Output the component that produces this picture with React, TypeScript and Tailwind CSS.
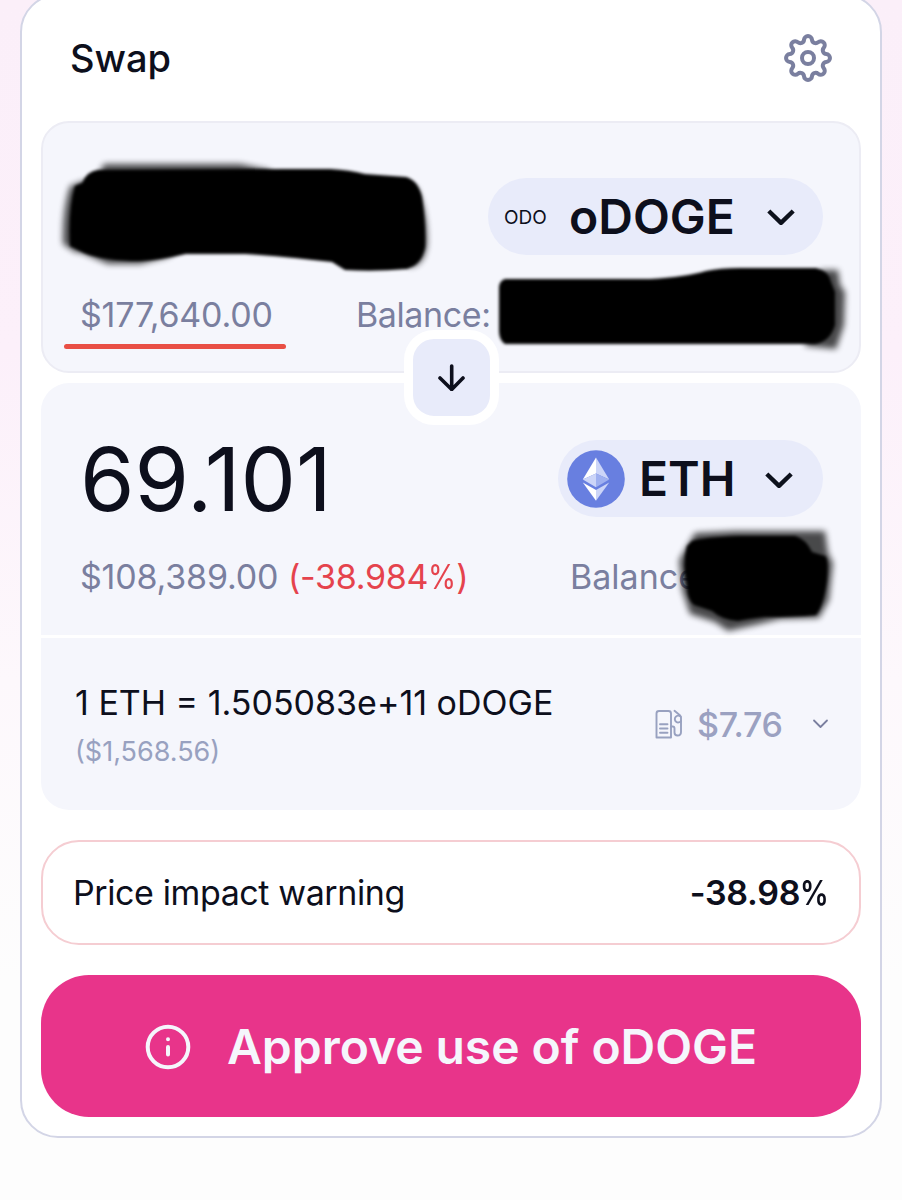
import React from "react";

const point = (r: number, deg: number) => {
  const a = (deg * Math.PI) / 180;
  return [25 + r * Math.cos(a), 25 + r * Math.sin(a)];
};

// Eight rounded teeth joined by rounded valleys.
function gearPath() {
  const tip = 4;
  const valley = 3.67;
  const t = tip / (tip + valley);
  const mix = (c: number[], v: number[]) =>
    `${(c[0] + (v[0] - c[0]) * t).toFixed(2)} ${(c[1] + (v[1] - c[1]) * t).toFixed(2)}`;
  let d = "";
  for (let k = 0; k < 8; k++) {
    const c = point(18, k * 45);
    const before = point(20, k * 45 - 22.5);
    const after = point(20, k * 45 + 22.5);
    d += k === 0 ? `M${mix(c, before)}` : `A${valley} ${valley} 0 0 0 ${mix(c, before)}`;
    d += `A${tip} ${tip} 0 0 1 ${mix(c, after)}`;
  }
  const first = mix(point(18, 0), point(20, -22.5));
  return `${d}A${valley} ${valley} 0 0 0 ${first}Z`;
}

const Gear = () => (
  <svg width="50" height="50" viewBox="0 0 50 50" fill="none" stroke="#7a7f9f" strokeWidth="4">
    <path d={gearPath()} />
    <circle cx="25" cy="25" r="6" />
  </svg>
);

const Chevron = () => (
  <svg width="28" height="18" viewBox="0 0 28 18" fill="none" stroke="#0d111c" strokeWidth="4.4" strokeLinejoin="round">
    <path d="M1.8 3 14 14.8 26.2 3" />
  </svg>
);

const EthLogo = () => (
  <svg width="58" height="58" viewBox="0 0 58 58">
    <circle cx="29" cy="29" r="28.8" fill="#687fe0" />
    <path d="M29 7.5 15.8 29.5 29 23.6Z" fill="#fff" />
    <path d="M29 7.5V23.6L42.2 29.5Z" fill="#ccd5f8" />
    <path d="M15.8 29.5 29 23.6V37.2Z" fill="#ccd5f8" />
    <path d="M42.2 29.5 29 23.6V37.2Z" fill="#9fb0f0" />
    <path d="M15.8 32.4 29 40.1V50.8Z" fill="#fff" />
    <path d="M42.2 32.4 29 40.1V50.8Z" fill="#ccd5f8" />
  </svg>
);

const GasPump = () => (
  <svg width="28" height="30" viewBox="0 0 28 30" fill="none" stroke="#98a1c0" strokeWidth="1.9" strokeLinecap="round" strokeLinejoin="round">
    <path d="M1.5 28.5V4.5Q1.5 2 4 2H13.5Q16 2 16 4.5V28.5Z" />
    <path d="M5 15.3H12.5M5 19.5H12.5M5 23.7H12.5" />
    <path d="M16 17.5H17.7Q19.5 17.5 19.5 19.5V23.5Q19.5 26.5 22.6 26.5Q26 26.5 26 23V8.5Q26 7.4 25.2 6.6L19.5 1.8" />
    <path d="M25.6 7.6A3.4 3.4 0 1 0 26 12" />
  </svg>
);

const Percent = () => <span className="-mr-[5px] inline-block origin-left scale-x-[.84]">%</span>;

export default function App() {
  return (
    <div className="h-[1200px] w-[902px] overflow-hidden bg-[linear-gradient(#fbeff9_0px,#fcf0fa_350px,#fdf8fc_680px,#fdfdfd_980px)] px-5 font-['Inter',sans-serif] text-[#0d0f1c]">
      <main className="-mt-[6px] h-[1144px] w-[862px] rounded-[38px] border-2 border-[#d3d5e6] bg-white px-[19px]">
        <header className="flex h-[125px] items-center justify-between pr-7 pb-0.5 pl-[29px]">
          <h1 className="text-[38px] leading-[50px] font-medium">Swap</h1>
          <button aria-label="Settings">
            <Gear />
          </button>
        </header>

        <section className="relative h-[252px] w-[820px] rounded-[28px] border-2 border-[#ececf4] bg-[#f5f6fc] pt-[55px]">
          <div className="flex h-[77px] justify-end pr-9">
            <button className="flex h-[77px] w-[335px] items-center rounded-full bg-[#e8ebfa] pl-4">
              <span className="w-[65px] pt-[3px] text-left text-[19px]">ODO</span>
              <span className="w-[198px] text-left text-[48px] leading-[60px] font-semibold">oDOGE</span>
              <Chevron />
            </button>
          </div>
          <div className="mt-[39px] flex h-10 items-center text-[34px] tracking-[-0.2px] text-[#7a7f9f]">
            <span className="w-[277px] pl-[37px]">$177,640.00</span>
            <span className="pl-9 tracking-[-0.4px]">Balance:</span>
          </div>
          <div className="mt-[10px] ml-[21px] h-[5px] w-[222px] rounded-full bg-[#e94f45]" />
          <svg className="absolute top-[-2px] left-[-2px] overflow-visible" width="820" height="252" viewBox="41 121 820 252">
            <defs>
              <filter id="soft" x="-20%" y="-20%" width="140%" height="140%">
                <feGaussianBlur stdDeviation="1.8" />
              </filter>
              <filter id="haze" x="-20%" y="-20%" width="140%" height="140%">
                <feGaussianBlur stdDeviation="3" />
              </filter>
            </defs>
            <g filter="url(#haze)" opacity=".7">
              <path d="M104 164H240L270 170V190H90ZM70 186 86 180 100 255 75 252 63 244Q62 210 70 186ZM75 250H180L168 257 140 264H108ZM415 185Q428 210 427 245Q424 267 408 267Z" />
              <path d="M820 270H838L840 285 845 292 844 325 836 349 805 346Z" />
            </g>
            <g filter="url(#soft)">
              <path d="M75 186 82 183Q87 171 98 170L285 169H330Q350 170 365 174L406 177Q418 180 422 197Q426 225 425 247Q422 264 407 269Q375 272 345 270L332 262Q280 256 245 254H186Q160 260 140 261Q105 261 84 253L70 246Q68 210 75 186Z" />
              <path d="M505 279H650Q685 277 706 271Q720 268 740 268H816Q829 271 831 282L835 292V325Q830 342 815 344H505Q499 340 499 331V288Q499 281 505 279Z" />
            </g>
          </svg>
        </section>

        <div className="relative z-10 flex h-[10px] items-center justify-center pb-0.5">
          <button aria-label="Switch tokens" className="flex size-[95px] shrink-0 items-center justify-center rounded-[30px] border-[9px] border-white bg-[#e8ebfa]">
            <svg width="28" height="28" viewBox="0 0 28 28" fill="none" stroke="#0d0f1c" strokeWidth="3.6" strokeLinecap="round" strokeLinejoin="round">
              <path d="M14.7 3V26.5M3 15 14.7 26.5 26 15" />
            </svg>
          </button>
        </div>

        <section className="relative h-[252px] w-[820px] rounded-t-[28px] bg-[#f5f6fc] pt-[57px]">
          <div className="flex h-[77px] items-center justify-between pr-[38px] pl-[39px]">
            <span className="pt-0.5 text-[88px] leading-[77px]">69.101</span>
            <button className="flex h-[77px] w-[265px] items-center rounded-full bg-[#e8ebfa] pl-[9px]">
              <EthLogo />
              <span className="w-[140px] pl-[14px] text-left text-[48px] leading-[60px] font-semibold">ETH</span>
              <span className="pt-0.5">
                <Chevron />
              </span>
            </button>
          </div>
          <div className="mt-[39px] flex h-10 items-center text-[34px] text-[#7a7f9f]">
            <span className="w-[208px] pl-[39px] tracking-[-0.2px]">$108,389.00</span>
            <span className="w-[321px] pl-[39px] tracking-[-0.3px] text-[#e5434d]">(-38.984<Percent />)</span>
            <span>Balance</span>
          </div>
          <svg className="absolute top-0 left-0 overflow-visible" width="820" height="252" viewBox="41 383 820 252">
            <g filter="url(#haze)" opacity=".7">
              <path d="M695 533 735 531H825L828 553 833 563 829 600 819 618 780 619 755 625 728 631 715 622 690 614 682 590 679 560Z" />
            </g>
            <g filter="url(#soft)">
              <path d="M692 541Q705 537 740 536H795Q806 539 812 552L825 556Q829 559 827 580Q824 605 816 615Q795 617 765 617Q747 619 738 621Q722 620 712 611L694 605Q687 599 687 585Q682 565 687 546Z" />
            </g>
          </svg>
        </section>

        <section className="mt-[3px] flex h-[172px] w-[820px] justify-between rounded-b-[28px] bg-[#f5f6fc] pr-[32px] pl-[34px]">
          <div className="pt-[45px]">
            <p className="text-[34px] leading-10">1 ETH = 1.505083e+11 oDOGE</p>
            <p className="mt-[11px] text-[27px] leading-9 text-[#98a1c0]">($1,568.56)</p>
          </div>
          <div className="flex h-[172px] items-center text-[34px] font-medium text-[#9ba1c1]">
            <GasPump />
            <span className="w-[129px] pl-[14px] tracking-[-0.3px]">$7.76</span>
            <svg width="17" height="12" viewBox="0 0 17 12" fill="none" stroke="#7a7f9f" strokeWidth="1.8" strokeLinecap="round" strokeLinejoin="round">
              <path d="M2 2.5 8.5 9 15 2.5" />
            </svg>
          </div>
        </section>

        <section className="mt-[30px] flex h-[105px] w-[820px] items-center justify-between rounded-[38px] border-2 border-[#f5cdd2] pr-[30px] pl-[30px] text-[34px]">
          <span className="tracking-[-0.4px]">Price impact warning</span>
          <span className="font-semibold tracking-[-0.3px]">-38.98<Percent /></span>
        </section>

        <button className="mt-[30px] flex h-[142px] w-[820px] items-center rounded-[48px] bg-[#e8348a] pt-0.5 pl-[104px] text-[#f5f6fc]">
          <svg width="46" height="46" viewBox="0 0 46 46" fill="none" stroke="#f5f6fc" strokeWidth="4" strokeLinecap="round">
            <circle cx="23" cy="23" r="20.3" />
            <path d="M23 23V30.5M23 15.2V15.3" />
          </svg>
          <span className="pl-9 text-[48px] leading-[60px] font-semibold tracking-[-0.05px]">Approve use of oDOGE</span>
        </button>
      </main>
    </div>
  );
}
